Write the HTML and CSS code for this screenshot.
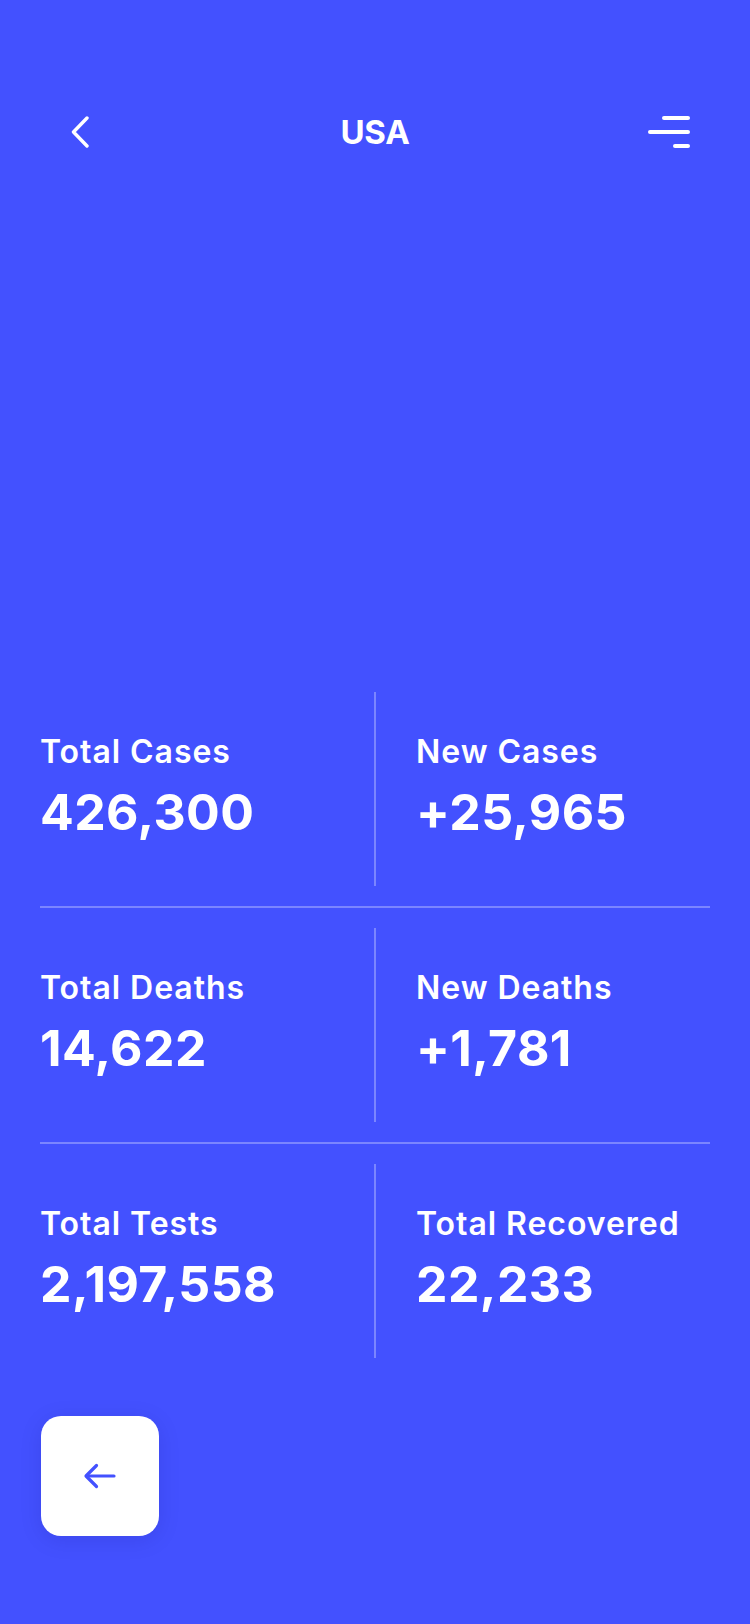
FILE: index.html
```html
<!DOCTYPE html>
<html lang="en">
<head>
<meta charset="utf-8">
<title>USA</title>
<link rel="stylesheet" href="styles.css">
</head>
<body>
<div class="screen">
  <header class="topbar">
    <button class="icon-btn back" aria-label="Back">
      <svg width="20" height="32" viewBox="0 0 20 32"><path d="M17 2 L3.5 16 L17 30" fill="none" stroke="#fff" stroke-width="3.4" stroke-linecap="round" stroke-linejoin="round"/></svg>
    </button>
    <h1 class="title">USA</h1>
    <button class="icon-btn menu" aria-label="Menu">
      <svg width="44" height="34" viewBox="0 0 44 34"><g stroke="#fff" stroke-width="4" stroke-linecap="round"><path d="M16 3 H40"/><path d="M2 17 H40"/><path d="M27 31 H40"/></g></svg>
    </button>
  </header>

  <main class="stats">
    <section class="row">
      <div class="cell"><div class="label">Total Cases</div><div class="value">426,300</div></div>
      <div class="vline"></div>
      <div class="cell right"><div class="label">New Cases</div><div class="value">+25,965</div></div>
    </section>
    <div class="hline"></div>
    <section class="row">
      <div class="cell"><div class="label">Total Deaths</div><div class="value">14,622</div></div>
      <div class="vline"></div>
      <div class="cell right"><div class="label">New Deaths</div><div class="value">+1,781</div></div>
    </section>
    <div class="hline"></div>
    <section class="row">
      <div class="cell"><div class="label">Total Tests</div><div class="value">2,197,558</div></div>
      <div class="vline"></div>
      <div class="cell right"><div class="label">Total Recovered</div><div class="value">22,233</div></div>
    </section>
  </main>

  <div class="footer">
    <button class="back-card" aria-label="Back">
      <svg width="34" height="28" viewBox="0 0 34 28"><g fill="none" stroke="#4351FF" stroke-width="3.2" stroke-linecap="round" stroke-linejoin="round"><path d="M4 14 H31"/><path d="M13.5 3.5 L3 14 L13.5 24.5"/></g></svg>
    </button>
  </div>
</div>
</body>
</html>
```

FILE: styles.css
```css
* { box-sizing: border-box; }
html, body {
  margin: 0;
  padding: 0;
  background: #4351FF;
}
body {
  font-family: Inter, "Noto Sans", "Liberation Sans", sans-serif;
  color: #fff;
}
.screen {
  width: 750px;
  height: 1624px;
  padding-top: 110px;
  overflow: hidden;
  background: #4351FF;
}
.topbar {
  display: flex;
  align-items: center;
  justify-content: space-between;
  height: 44px;
  padding: 0 58px 0 70px;
  position: relative;
}
.icon-btn {
  background: none;
  border: 0;
  padding: 0;
  display: flex;
  align-items: center;
  justify-content: center;
  cursor: pointer;
}
.title {
  margin: 0;
  font-size: 33px;
  line-height: 44px;
  font-weight: 700;
  letter-spacing: -0.3px;
  position: absolute;
  left: 0;
  right: 0;
  text-align: center;
  pointer-events: none;
}
.stats {
  margin-top: 538px;
  padding: 0 40px;
}
.row {
  display: grid;
  grid-template-columns: 1fr 2px 1fr;
  height: 194px;
}
.vline {
  background: rgba(255,255,255,0.3);
}
.hline {
  height: 2px;
  margin: 20px 0;
  background: rgba(255,255,255,0.3);
}
.cell {
  padding-top: 41px;
}
.cell.right {
  padding-left: 40px;
}
.label {
  font-size: 32px;
  line-height: 38px;
  font-weight: 600;
  letter-spacing: 0.95px;
}
.value {
  margin-top: 11px;
  font-size: 50px;
  line-height: 60px;
  font-weight: 700;
  letter-spacing: 0.4px;
}
.footer {
  padding: 58px 0 0 41px;
}
.back-card {
  width: 118px;
  height: 120px;
  border: 0;
  border-radius: 20px;
  background: #fff;
  box-shadow: 0 4px 22px rgba(20, 20, 90, 0.12);
  display: flex;
  align-items: center;
  justify-content: center;
  padding: 0;
  cursor: pointer;
}
```
